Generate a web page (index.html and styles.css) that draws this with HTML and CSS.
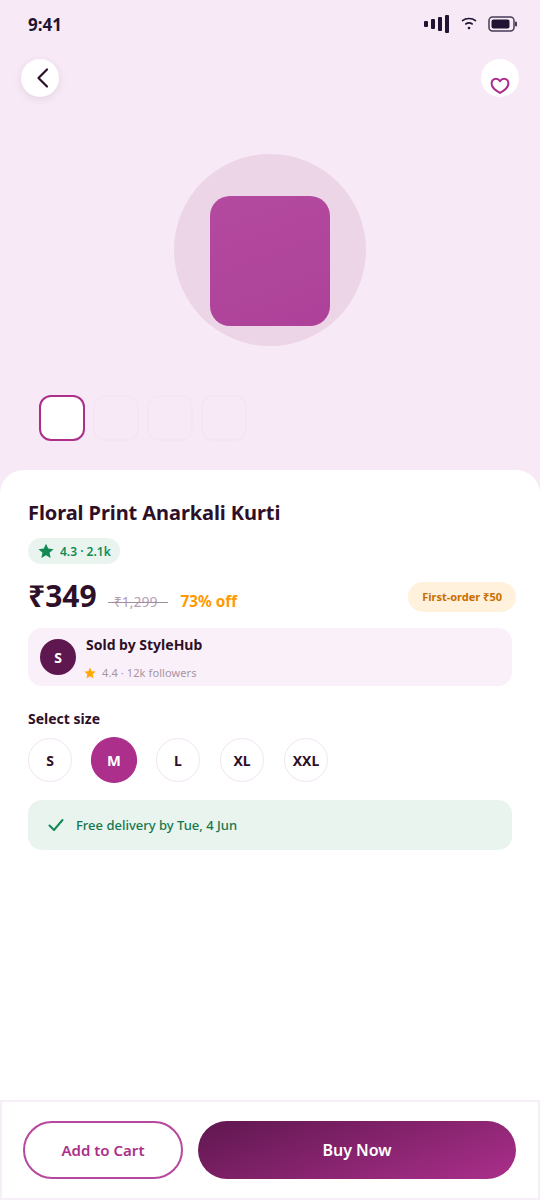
FILE: index.html
```html
<!DOCTYPE html>
<html lang="en">
<head>
    <meta charset="UTF-8">
    <meta name="viewport" content="width=device-width, initial-scale=1.0">
    <title>Floral Print Anarkali Kurti</title>
    <link rel="stylesheet" href="styles.css">
</head>
<body>
    <div class="screen">
        <div class="hero">
            <div class="status-bar">
                <span class="time">9:41</span>
                <div class="status-icons">
                    <svg width="26" height="18" viewBox="0 0 26 18"><rect x="0" y="6" width="4" height="6" rx="1"/><rect x="7" y="4" width="4" height="10" rx="1"/><rect x="14" y="2" width="4" height="14" rx="1"/><rect x="21" y="0" width="4" height="18" rx="1"/></svg>
                    <svg width="16" height="14" viewBox="0 0 16 14" fill="none" stroke="#1f1533" stroke-width="1.6" stroke-linecap="round"><path d="M1.500 3.600C5 .8 11 .8 14.500 3.600"/><path d="M4.800 7C6.800 5.600 9.200 5.600 11.200 7"/><circle cx="8" cy="11" r="1.300" fill="#1f1533" stroke="none"/></svg>
                    <svg width="29" height="16" viewBox="0 0 29 16"><rect x="1" y="1" width="25" height="14" rx="3.500" fill="none" stroke="#453b57" stroke-width="1.500"/><rect x="3.500" y="3.500" width="18" height="9" rx="2" fill="#1f1533"/><rect x="27" y="5.500" width="2" height="5" rx="1" fill="#453b57"/></svg>
                </div>
            </div>
            <div class="hero-nav">
                <button class="round-btn back-btn">
                    <svg width="16" height="22" viewBox="0 0 16 22" fill="none" stroke="#2d1028" stroke-width="2.200" stroke-linecap="round" stroke-linejoin="round"><path d="M13 2.500L4.500 11l8.500 8.500"/></svg>
                </button>
                <button class="round-btn heart-btn">
                    <svg width="20" height="18" viewBox="0 0 20 18" fill="none" stroke="#ab2f8b" stroke-width="2" stroke-linejoin="round"><path d="M10 16C6 13.600 1.600 11 1.600 6.500 1.600 3.600 3.600 1.800 6 1.800c1.700 0 3 .8 4 2.300 1-1.500 2.300-2.300 4-2.300 2.400 0 4.400 1.800 4.400 4.700 0 4.500-4.400 7.100-8.400 9.500z"/></svg>
                </button>
            </div>
            <div class="product-circle">
                <div class="product-image"></div>
            </div>
            <div class="thumbs">
                <div class="thumb active"></div>
                <div class="thumb"></div>
                <div class="thumb"></div>
                <div class="thumb"></div>
            </div>
        </div>

        <div class="sheet">
            <h1>Floral Print Anarkali Kurti</h1>
            <div class="rating-pill">
                <svg width="16" height="16" viewBox="0 0 24 24" fill="#138a55"><path d="M12 1l3.300 7.400 8 .8-6 5.400 1.700 7.900-7-4.100-7 4.100 1.700-7.900-6-5.400 8-.8z"/></svg>
                <span>4.3 · 2.1k</span>
            </div>
            <div class="price-row">
                <span class="price">₹349</span>
                <span class="old-price">₹1,299</span>
                <span class="discount">73% off</span>
                <span class="offer-pill">First-order ₹50</span>
            </div>
            <div class="seller">
                <div class="seller-avatar">S</div>
                <div class="seller-info">
                    <div class="seller-name">Sold by StyleHub</div>
                    <div class="seller-meta">
                        <svg width="12" height="12" viewBox="0 0 24 24" fill="#ffa800"><path d="M12 1l3.300 7.400 8 .8-6 5.400 1.700 7.900-7-4.100-7 4.100 1.700-7.900-6-5.400 8-.8z"/></svg>
                        <span>4.4 · 12k followers</span>
                    </div>
                </div>
            </div>
            <h2>Select size</h2>
            <div class="sizes">
                <div class="size">S</div>
                <div class="size selected">M</div>
                <div class="size">L</div>
                <div class="size">XL</div>
                <div class="size">XXL</div>
            </div>
            <div class="delivery">
                <svg width="16" height="14" viewBox="0 0 16 14" fill="none" stroke="#138a55" stroke-width="2" stroke-linecap="round" stroke-linejoin="round"><path d="M1.500 7.500l4.500 4.500L14.500 2"/></svg>
                <span>Free delivery by Tue, 4 Jun</span>
            </div>
        </div>

        <div class="bottom-bar">
            <button class="cart-btn">Add to Cart</button>
            <button class="buy-btn">Buy Now</button>
        </div>
    </div>
</body>
</html>
```

FILE: styles.css
```css
* {
    box-sizing: border-box;
}
body {
    margin: 0;
    font-family: "Noto Sans", sans-serif;
    color: #2d1028;
    background: #fff;
}
button {
    border: none;
    outline: none;
    padding: 0;
    font-family: inherit;
    cursor: pointer;
}
.screen {
    display: flex;
    flex-direction: column;
    width: 540px;
    height: 1200px;
    overflow: hidden;
}
.hero {
    display: flex;
    flex-direction: column;
    height: 494px;
    padding-bottom: 24px;
    flex-shrink: 0;
    background: #f7eaf6;
}
.status-bar {
    display: flex;
    align-items: center;
    justify-content: space-between;
    height: 48px;
    padding: 0 23px 0 28px;
}
.time {
    font-size: 17px;
    font-weight: 700;
    color: #1f1533;
}
.status-icons {
    display: flex;
    align-items: center;
    gap: 11px;
}
.status-icons svg:first-child {
    fill: #1f1533;
}
.hero-nav {
    display: flex;
    justify-content: space-between;
    margin-top: 11px;
    padding: 0 21px;
}
.round-btn {
    display: flex;
    align-items: center;
    justify-content: center;
    width: 38px;
    height: 38px;
    border-radius: 50%;
    background: #fff;
}
.back-btn {
    box-shadow: 0 2px 8px rgba(45, 16, 40, .1);
}
.back-btn svg {
    margin-left: 3px;
}
.heart-btn svg {
    margin-top: 15px;
}
.product-circle {
    display: flex;
    align-items: center;
    justify-content: center;
    width: 192px;
    height: 192px;
    margin: 57px auto 0;
    border-radius: 50%;
    background: #ecd5e7;
}
.product-image {
    width: 120px;
    height: 130px;
    margin-top: 22px;
    border-radius: 20px;
    background: linear-gradient(160deg, #b44a9f, #ad4199);
}
.thumbs {
    display: flex;
    gap: 8px;
    margin-top: 49px;
    padding-left: 39px;
}
.thumb {
    width: 46px;
    height: 46px;
    border: 2px solid #f4e6f3;
    border-radius: 12px;
}
.thumb.active {
    border-color: #ab2f8b;
    background: #fff;
}
.sheet {
    flex: 1;
    margin-top: -24px;
    padding: 28px 28px 0;
    border-radius: 24px 24px 0 0;
    background: #fff;
}
h1 {
    margin: 0;
    font-size: 20px;
    line-height: 30px;
    font-weight: 700;
    letter-spacing: -.08px;
}
.rating-pill {
    display: inline-flex;
    align-items: center;
    gap: 6px;
    height: 26px;
    margin-top: 10px;
    padding: 0 9px 0 10px;
    border-radius: 13px;
    font-size: 12px;
    font-weight: 600;
    color: #138a55;
    background: #e9f4ef;
}
.price-row {
    display: flex;
    align-items: baseline;
    height: 36px;
    margin-top: 14px;
    margin-right: -4px;
}
.price {
    font-size: 30px;
    line-height: 36px;
    font-weight: 700;
}
.old-price {
    position: relative;
    margin-left: 11px;
    padding: 0 11px 0 6px;
    font-size: 14px;
    color: #b5a0b2;
}
.old-price::after {
    content: "";
    position: absolute;
    left: 0;
    right: 0;
    top: 50%;
    height: 1.500px;
    background: #a48c9f;
}
.discount {
    margin-left: 12px;
    font-size: 15.300px;
    font-weight: 700;
    color: #ff9a00;
}
.offer-pill {
    align-self: center;
    margin-left: auto;
    margin-top: 2px;
    padding: 0 14px;
    height: 30px;
    line-height: 30px;
    border-radius: 15px;
    font-size: 11px;
    font-weight: 700;
    color: #c96f00;
    background: #fff1dc;
}
.seller {
    display: flex;
    align-items: center;
    gap: 10px;
    height: 58px;
    margin-top: 14px;
    padding: 0 12px;
    border-radius: 14px;
    background: #faf0f9;
}
.seller-avatar {
    display: flex;
    align-items: center;
    justify-content: center;
    width: 36px;
    height: 36px;
    border-radius: 50%;
    font-size: 14px;
    font-weight: 700;
    color: #fff;
    background: #5f174f;
}
.seller-info {
    padding-top: 2px;
}
.seller-name {
    font-size: 14px;
    line-height: 18px;
    font-weight: 700;
}
.seller-meta {
    display: flex;
    align-items: center;
    gap: 6px;
    margin-top: 12px;
    margin-left: -2px;
    font-size: 11px;
    line-height: 14px;
    letter-spacing: .1px;
    color: #a695a3;
}
h2 {
    margin: 23px 0 0;
    font-size: 14px;
    line-height: 20px;
    font-weight: 700;
}
.sizes {
    display: flex;
    align-items: center;
    gap: 20px;
    height: 46px;
    margin-top: 8px;
}
.size {
    display: flex;
    align-items: center;
    justify-content: center;
    width: 44px;
    height: 44px;
    border: 1px solid #f3e5f2;
    border-radius: 50%;
    font-size: 14px;
    font-weight: 700;
}
.size.selected {
    border-color: #ab2f8b;
    color: #fff;
    background: #ab2f8b;
    transform: scale(1.05);
}
.delivery {
    display: flex;
    align-items: center;
    gap: 12px;
    height: 50px;
    margin-top: 17px;
    padding: 0 20px;
    border-radius: 14px;
    font-size: 13px;
    font-weight: 500;
    color: #17774c;
    background: #e9f4ef;
}
.bottom-bar {
    display: flex;
    align-items: center;
    gap: 15px;
    height: 100px;
    padding: 0 22px 0 21px;
    flex-shrink: 0;
    border: 2px solid #f7eff7;
    background: #fff;
}
.cart-btn {
    width: 160px;
    height: 58px;
    border: 2px solid #b7489f;
    border-radius: 29px;
    font-size: 15px;
    font-weight: 600;
    color: #ab2f8b;
    background: #fff;
}
.buy-btn {
    flex: 1;
    height: 58px;
    border-radius: 29px;
    font-size: 16px;
    font-weight: 600;
    color: #fff;
    background: linear-gradient(160deg, #5f174f, #ab2f8b);
}
```
